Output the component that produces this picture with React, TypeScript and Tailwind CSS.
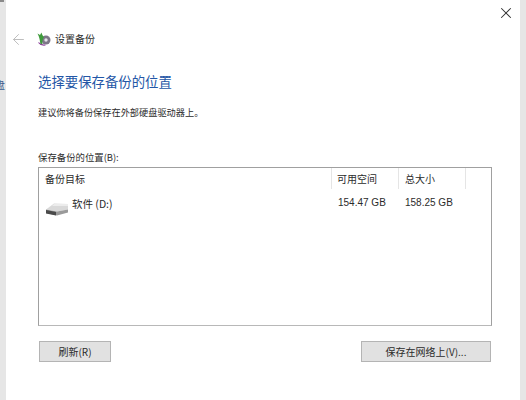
import React from 'react';
import { ArrowLeft, X } from 'lucide-react';

const font = { fontFamily: '"Noto Sans CJK SC", "Liberation Sans", sans-serif' };
const latin = { fontFamily: '"Liberation Sans", sans-serif' };

const BackupIcon = () => (
  <svg width="14" height="14" viewBox="0 0 14 14" className="shrink-0">
    <circle cx="9" cy="8" r="4.5" fill="#7d7688" />
    <circle cx="9" cy="8" r="1.7" fill="#e6e3ea" />
    <path d="M3.5 13 C3 9 2.5 5 0.5 1.5 L3 3 L4.5 0.5 C5 3 6 4 7 5 C5.5 7 5 10 5.5 13 Z" fill="#3f9b3c" />
    <path d="M1.5 10.5 C3 12.5 5.5 13.5 8.5 13" stroke="#8a3f9a" strokeWidth="1.2" fill="none" />
  </svg>
);

const DriveIcon = () => (
  <svg width="24" height="13" viewBox="0 0 24 13" className="shrink-0">
    <path d="M1 6.5 L9 0.5 L23 1 L23 6.5 L12 8.5 Z" fill="#d9d9d9" />
    <path d="M9 1 L23 1 L23 3 L7 3 Z" fill="#ececec" />
    <path d="M1 6.5 L12 8.5 L23 6.5 L23 9.5 L12 12.5 L1 10 Z" fill="#9a9a9a" />
    <path d="M1 7 L11 9 L11 12.5 L1 10.5 Z" fill="#4a4a4a" />
  </svg>
);

const App: React.FC = () => {
  return (
    <div className="w-[526px] h-[400px] flex bg-white overflow-hidden text-[#2b2b2b]" style={font}>
      <div className="relative w-[6px] bg-[#e6e6e6] overflow-hidden pt-[78px]">
        <div className="absolute left-0 top-0 w-[4px] h-[2px] bg-[#8a8a8a]" />
        <div className="text-[10px] leading-[14px] text-[#3a5a8c] -ml-[5px]">盘</div>
      </div>

      <div className="flex-1 flex flex-col pl-[32px] pr-[28px]">
        <div className="flex justify-end h-[24px] -mr-[28px] pt-[4px] pr-[5px]">
          <X className="w-[18px] h-[18px] text-[#333]" strokeWidth={1.4} />
        </div>

        <div className="flex items-center h-[18px] mt-[6px] -ml-[28px]">
          <ArrowLeft className="w-[17px] h-[17px] text-[#bdbdbd]" strokeWidth={1.4} />
          <div className="ml-[10px]"><BackupIcon /></div>
          <span className="ml-[4px] text-[10px] leading-[14px]">设置备份</span>
        </div>

        <h1 className="mt-[23px] text-[13.4px] leading-[20px] font-normal text-[#2356a6]">选择要保存备份的位置</h1>
        <p className="mt-[14px] text-[9.2px] leading-[14px]">建议你将备份保存在外部硬盘驱动器上。</p>

        <label className="mt-[31px] text-[9.4px] leading-[14px]">保存备份的位置(B):</label>

        <div className="mt-[3px] h-[159px] border border-[#a0a0a0] border-b-[#b8b8b8] text-[10px]">
          <div className="flex h-[21px] leading-[21px]">
            <div className="w-[293px] pl-[6px] border-r border-[#e5e5e5]">备份目标</div>
            <div className="w-[67px] pl-[5px] border-r border-[#e5e5e5]">可用空间</div>
            <div className="w-[67px] pl-[6px] border-r border-[#e5e5e5]">总大小</div>
          </div>
          <div className="flex mt-[3px]">
            <div className="w-[293px] pl-[6px] flex items-start">
              <div className="mt-[11px]"><DriveIcon /></div>
              <span className="leading-[16px] ml-[3px] mt-[4px] text-[10.5px]">软件 (D:)</span>
            </div>
            <div className="w-[67px] pl-[6px] leading-[16px] mt-[3px]" style={latin}>154.47 GB</div>
            <div className="w-[67px] pl-[6px] leading-[16px] mt-[3px]" style={latin}>158.25 GB</div>
          </div>
        </div>

        <div className="mt-[15px] mx-[1px] flex justify-between">
          <button className="w-[72px] h-[21px] bg-[#e1e1e1] border border-[#b4b4b4] text-[10px] leading-[17px]">刷新(R)</button>
          <button className="w-[130px] h-[21px] bg-[#e1e1e1] border border-[#b4b4b4] text-[10px] leading-[17px]">保存在网络上(V)...</button>
        </div>
      </div>

      <div className="w-[6px] bg-[#e6e6e6]" />
    </div>
  );
};

export default App;
